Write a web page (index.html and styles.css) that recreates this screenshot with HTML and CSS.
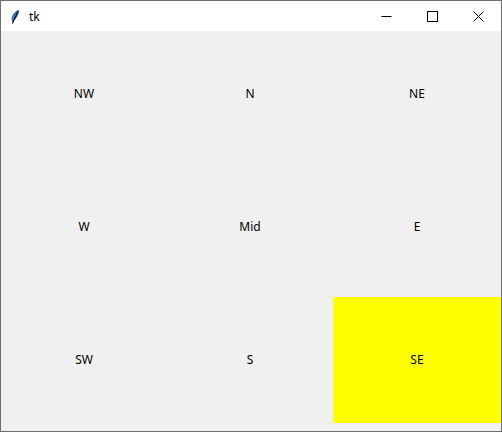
FILE: index.html
```html
<!DOCTYPE html>
<html>
<head>
<meta charset="utf-8">
<link rel="stylesheet" href="styles.css">
</head>
<body>
<div class="window">
  <div class="titlebar">
    <svg class="feather" width="8" height="14" viewBox="0 0 8 14">
      <path d="M7.6 0.4 C4.6 1.2 1.6 4.2 1.2 8.6 L1.4 11 C4.2 9.6 7 6 7.6 0.4 Z" fill="#4a8fd8" stroke="#1b3f78" stroke-width="0.9"/>
      <path d="M6.6 1.8 L1.4 13.6" stroke="#111" stroke-width="1.2" fill="none"/>
    </svg>
    <span class="title">tk</span>
    <div class="spacer"></div>
    <div class="cap-btn">
      <svg width="11" height="11" viewBox="0 0 11 11"><path d="M0.5 5.5 H10.5" stroke="#000" stroke-width="1"/></svg>
    </div>
    <div class="cap-btn">
      <svg width="11" height="11" viewBox="0 0 11 11"><rect x="0.5" y="0.5" width="10" height="10" fill="none" stroke="#000" stroke-width="1"/></svg>
    </div>
    <div class="cap-btn">
      <svg width="11" height="11" viewBox="0 0 11 11"><path d="M0.5 0.5 L10.5 10.5 M10.5 0.5 L0.5 10.5" stroke="#000" stroke-width="1"/></svg>
    </div>
  </div>
  <div class="grid">
    <div class="cell"><div class="label">NW</div></div>
    <div class="cell"><div class="label">N</div></div>
    <div class="cell"><div class="label">NE</div></div>
    <div class="cell"><div class="label">W</div></div>
    <div class="cell"><div class="label">Mid</div></div>
    <div class="cell"><div class="label">E</div></div>
    <div class="cell"><div class="label">SW</div></div>
    <div class="cell"><div class="label">S</div></div>
    <div class="cell"><div class="label yellow">SE</div></div>
  </div>
</div>
</body>
</html>
```
FILE: styles.css
```css
html, body {
  margin: 0;
  padding: 0;
  background: #ffffff;
}
.window {
  width: 502px;
  height: 432px;
  box-sizing: border-box;
  border: 1px solid #6e6e6e;
  display: flex;
  flex-direction: column;
  font-family: "Noto Sans", "Liberation Sans", sans-serif;
  font-size: 12px;
  color: #000;
}
.titlebar {
  height: 30px;
  background: #ffffff;
  display: flex;
  align-items: center;
  flex: none;
}
.feather {
  margin-left: 10px;
  margin-top: 1px;
}
.title {
  margin-left: 10px;
  font-size: 12px;
  color: #000;
}
.spacer {
  flex: 1;
}
.cap-btn {
  width: 46px;
  height: 30px;
  display: flex;
  align-items: center;
  justify-content: center;
}
.grid {
  flex: 1;
  background: #f0f0f0;
  display: grid;
  grid-template-columns: 166px 166px 1fr;
  grid-template-rows: 133px 133px 1fr;
}
.cell {
  display: flex;
  align-items: flex-start;
}
.label {
  width: 100%;
  height: 126px;
  box-sizing: border-box;
  padding-bottom: 2px;
  display: flex;
  align-items: center;
  justify-content: center;
}
.yellow {
  background: #ffff00;
}
```
